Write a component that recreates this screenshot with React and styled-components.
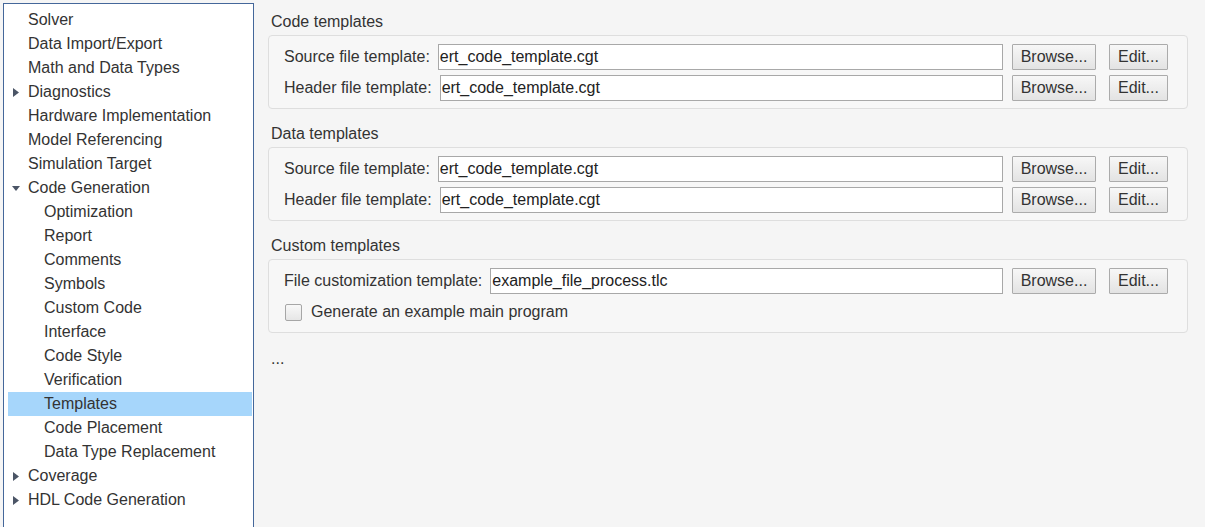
import React from 'react';
import styled, { createGlobalStyle } from 'styled-components';

const GlobalStyle = createGlobalStyle`
  html, body {
    margin: 0;
    padding: 0;
    background: #f5f5f5;
    font-family: "Liberation Sans", Arial, sans-serif;
    color: #333;
  }
`;

const Page = styled.div`
  display: flex;
  height: 527px;
  overflow: hidden;
`;

const Sidebar = styled.div`
  width: 251px;
  margin: 3px 0 0 3px;
  padding: 4px 1px 0 4px;
  box-sizing: border-box;
  background: #fff;
  border: 1px solid #44679a;
  border-bottom: none;
  flex-shrink: 0;
`;

const TreeRow = styled.div`
  position: relative;
  height: 24px;
  line-height: 24px;
  font-size: 16px;
  color: #333;
  padding-left: ${(p) => (p.$child ? 36 : 20)}px;
  background: ${(p) => (p.$selected ? '#a6d6fb' : 'transparent')};
  white-space: nowrap;
`;

const Twisty = styled.svg`
  position: absolute;
  left: 4px;
  top: 8px;
`;

const Main = styled.div`
  flex: 1;
  padding: 10px 17px 0 14px;
`;

const Heading = styled.div`
  font-size: 16px;
  line-height: 24px;
  padding-left: 3px;
  margin: ${(p) => (p.$first ? 0 : 13)}px 0 1px;
`;

const Group = styled.div`
  border: 1px solid #dedede;
  border-radius: 4px;
  background: #f7f7f7;
  padding: 8px 19px 7px 15px;
  display: flex;
  flex-direction: column;
  gap: 5px;
`;

const Row = styled.div`
  display: flex;
  align-items: center;
  height: 26px;
  font-size: 16px;
`;

const Label = styled.span`
  margin-right: 8px;
  white-space: nowrap;
`;

const Field = styled.div`
  flex: 1;
  height: 26px;
  box-sizing: border-box;
  border: 1px solid #a8a8a8;
  background: #fff;
  padding: 0 1px;
  line-height: 24px;
  font-size: 16px;
  color: #222;
  margin-right: 9px;
`;

const Button = styled.button`
  height: 26px;
  width: ${(p) => p.$w}px;
  margin-left: ${(p) => p.$ml || 0}px;
  box-sizing: border-box;
  border: 1px solid #ababab;
  border-radius: 1px;
  background: linear-gradient(#f7f7f7, #e3e3e3);
  font-family: "Liberation Sans", Arial, sans-serif;
  font-size: 16px;
  color: #333;
  padding: 0;
`;

const Check = styled.span`
  width: 17px;
  height: 17px;
  box-sizing: border-box;
  border: 1px solid #a6a6a6;
  border-radius: 2px;
  background: linear-gradient(#f8f8f8, #e6e6e6);
  margin: 0 9px 0 1px;
`;

const Ellipsis = styled.div`
  font-size: 16px;
  line-height: 22px;
  padding-left: 3px;
  margin-top: 15px;
`;

const tree = [
  { t: 'Solver' },
  { t: 'Data Import/Export' },
  { t: 'Math and Data Types' },
  { t: 'Diagnostics', tw: 'closed' },
  { t: 'Hardware Implementation' },
  { t: 'Model Referencing' },
  { t: 'Simulation Target' },
  { t: 'Code Generation', tw: 'open' },
  { t: 'Optimization', c: true },
  { t: 'Report', c: true },
  { t: 'Comments', c: true },
  { t: 'Symbols', c: true },
  { t: 'Custom Code', c: true },
  { t: 'Interface', c: true },
  { t: 'Code Style', c: true },
  { t: 'Verification', c: true },
  { t: 'Templates', c: true, sel: true },
  { t: 'Code Placement', c: true },
  { t: 'Data Type Replacement', c: true },
  { t: 'Coverage', tw: 'closed' },
  { t: 'HDL Code Generation', tw: 'closed' },
];

function Arrow({ open }) {
  return (
    <Twisty width="9" height="9" viewBox="0 0 9 9">
      {open ? (
        <polygon points="0,2 8,2 4,7" fill="#4b5566" />
      ) : (
        <polygon points="1,0 7,4.5 1,9" fill="#4b5566" />
      )}
    </Twisty>
  );
}

function TemplateRow({ label, value }) {
  return (
    <Row>
      <Label>{label}</Label>
      <Field>{value}</Field>
      <Button $w={84}>Browse...</Button>
      <Button $w={59} $ml={13}>Edit...</Button>
    </Row>
  );
}

export default function App() {
  return (
    <Page>
      <GlobalStyle />
      <Sidebar>
        {tree.map((n) => (
          <TreeRow key={n.t} $child={n.c} $selected={n.sel}>
            {n.tw && <Arrow open={n.tw === 'open'} />}
            {n.t}
          </TreeRow>
        ))}
      </Sidebar>
      <Main>
        <Heading $first>Code templates</Heading>
        <Group>
          <TemplateRow label="Source file template:" value="ert_code_template.cgt" />
          <TemplateRow label="Header file template:" value="ert_code_template.cgt" />
        </Group>
        <Heading>Data templates</Heading>
        <Group>
          <TemplateRow label="Source file template:" value="ert_code_template.cgt" />
          <TemplateRow label="Header file template:" value="ert_code_template.cgt" />
        </Group>
        <Heading>Custom templates</Heading>
        <Group>
          <TemplateRow label="File customization template:" value="example_file_process.tlc" />
          <Row>
            <Check />
            Generate an example main program
          </Row>
        </Group>
        <Ellipsis>...</Ellipsis>
      </Main>
    </Page>
  );
}
